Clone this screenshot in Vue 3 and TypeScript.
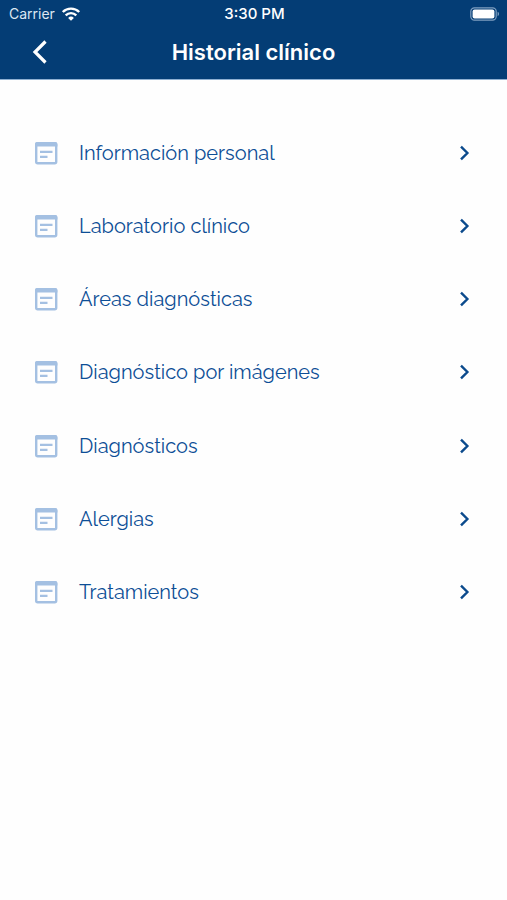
<script setup lang="ts">
interface Section {
  id: string
  label: string
}

const sections: Section[] = [
  { id: 'informacion-personal', label: 'Información personal' },
  { id: 'laboratorio-clinico', label: 'Laboratorio clínico' },
  { id: 'areas-diagnosticas', label: 'Áreas diagnósticas' },
  { id: 'diagnostico-por-imagenes', label: 'Diagnóstico por imágenes' },
  { id: 'diagnosticos', label: 'Diagnósticos' },
  { id: 'alergias', label: 'Alergias' },
  { id: 'tratamientos', label: 'Tratamientos' },
]
</script>

<template>
  <div class="screen">
    <header class="header">
      <div class="status">
        <div class="carrier">
          <span>Carrier</span>
          <svg class="wifi" viewBox="0 0 18 14" aria-hidden="true">
            <path d="M.8 5a11.6 11.6 0 0 1 16.4 0" />
            <path d="M3.7 8.3a7.5 7.5 0 0 1 10.6 0" />
            <path class="dot" d="M9 13.8 6.1 10.9a4.1 4.1 0 0 1 5.8 0Z" />
          </svg>
        </div>
        <time class="time">3:30 PM</time>
        <svg class="battery" viewBox="0 0 30 14" aria-hidden="true">
          <rect class="shell" x="0.8" y="0.8" width="25.4" height="12.4" rx="3.6" />
          <rect class="charge" x="2.6" y="2.6" width="21.8" height="8.8" rx="2" />
          <path class="cap" d="M27.6 4.8a2.4 2.4 0 0 1 0 4.4Z" />
        </svg>
      </div>
      <div class="bar">
        <button class="back" type="button" aria-label="Volver">
          <svg viewBox="0 0 16 24" aria-hidden="true">
            <path d="M13.5 1.5 3 12l10.5 10.5" />
          </svg>
        </button>
        <h1 class="title">Historial clínico</h1>
      </div>
    </header>

    <main>
      <ul class="list">
        <li v-for="section in sections" :key="section.id">
          <a class="row" :href="`#${section.id}`">
            <svg class="note" viewBox="0 0 24 24" aria-hidden="true">
              <rect class="frame" x="2.2" y="2.2" width="20" height="20" rx="1.5" />
              <path class="band" d="M1 5.4V3a2 2 0 0 1 2-2h18.4a2 2 0 0 1 2 2v2.4Z" />
              <path class="line" d="M6 10.8h12.5M6 15.8h7.5" />
            </svg>
            <span class="label">{{ section.label }}</span>
            <svg class="chevron" viewBox="0 0 10 16" aria-hidden="true">
              <path d="m1 1.6 6.4 6.4L1 14.4" />
            </svg>
          </a>
        </li>
      </ul>
    </main>
  </div>
</template>

<style>
body {
  background: #fefefe;
}
</style>

<style scoped>
.screen {
  font-family: Inter, "Liberation Sans", sans-serif;
}

.header {
  background: #043d75;
  border-bottom: 1px solid #8fb0d2;
  color: #fff;
}

.status {
  display: grid;
  grid-template-columns: 1fr auto 1fr;
  align-items: center;
  height: 27px;
  padding: 0 7px 0 9px;
  font-size: 14px;
}

.carrier {
  display: flex;
  align-items: center;
  gap: 7px;
  color: #dce7f2;
}

.wifi {
  width: 18px;
  height: 14px;
  overflow: visible;
  fill: none;
  stroke: #fff;
  stroke-width: 2.4;
}

.wifi .dot {
  fill: #fff;
  stroke: none;
}

.time {
  font-size: 15px;
  font-weight: 500;
}

.battery {
  justify-self: end;
  width: 30px;
  height: 14px;
}

.shell {
  fill: none;
  stroke: #7f9fc0;
  stroke-width: 1.2;
}

.charge {
  fill: #fff;
}

.cap {
  fill: #7f9fc0;
}

.bar {
  display: grid;
  grid-template-columns: 1fr auto 1fr;
  align-items: center;
  height: 50px;
  padding: 0 32px 2px;
}

.back {
  justify-self: start;
  display: flex;
  padding: 0;
  border: 0;
  background: none;
  cursor: pointer;
}

.back svg {
  width: 16px;
  height: 24px;
  fill: none;
  stroke: #fff;
  stroke-width: 3.2;
}

.title {
  margin: 0;
  font-size: 22px;
  font-weight: 600;
  line-height: 28px;
}

.list {
  display: grid;
  grid-auto-rows: 1fr;
  min-height: 513px;
  margin: 0;
  padding: 36px 37px 0 34px;
  list-style: none;
}

.row {
  display: flex;
  align-items: center;
  height: 100%;
  color: #0d4e96;
  font-family: Raleway, Lato, sans-serif;
  font-size: 20px;
  font-weight: 450;
  line-height: 28px;
  text-decoration: none;
}

.note {
  flex: none;
  width: 24px;
  height: 24px;
  margin-right: 21px;
}

.frame {
  fill: none;
  stroke: #a4c0e2;
  stroke-width: 2.4;
}

.band {
  fill: #a4c0e2;
}

.line {
  stroke: #a4c0e2;
  stroke-width: 2.2;
}

.label {
  flex: 1;
}

.chevron {
  flex: none;
  width: 10px;
  height: 16px;
  fill: none;
  stroke: #0b4a8c;
  stroke-width: 2.4;
}
</style>
